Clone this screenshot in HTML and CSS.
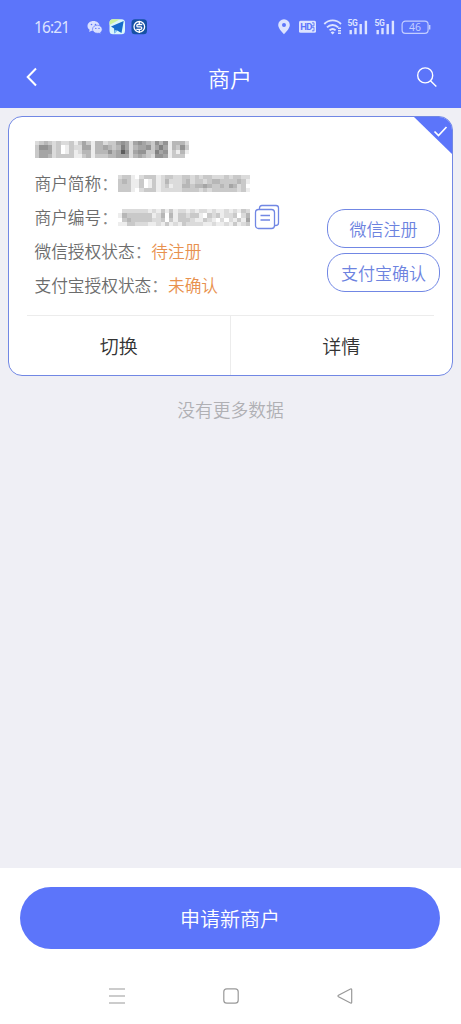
FILE: index.html
```
<!DOCTYPE html>
<html lang="zh-CN">
<head>
<meta charset="utf-8">
<title>商户</title>
<link rel="stylesheet" href="styles.css">
</head>
<body>
<div class="screen">
  <header class="header">
    <div class="status">
      <span class="clock">16:21</span>
      <svg class="status-apps" width="62" height="18" viewBox="0 0 62 18">
        <g fill="#d9e0ff">
          <path d="M6.500 3C2.900 3 .5 5.200.5 8c0 1.600.8 2.900 2.100 3.800L2.200 14l2.300-1.200c.7.2 1.300.2 2 .2C10 13 12.500 10.800 12.500 8S10 3 6.500 3Z"/>
          <path stroke="#5c75fa" stroke-width=".7" d="M10.400 7.200c2.700 0 4.800 1.800 4.800 4.100 0 1.300-.6 2.300-1.600 3l.3 1.700-1.900-.9c-.5.2-1 .2-1.600.2-2.800 0-4.900-1.800-4.900-4 0-2.300 2.100-4.100 4.900-4.100Z"/>
        </g>
        <g fill="#5c75fa"><circle cx="4.500" cy="6.500" r=".8"/><circle cx="8.500" cy="6.500" r=".8"/><circle cx="8.800" cy="10.400" r=".7"/><circle cx="12" cy="10.400" r=".7"/></g>
        <rect x="22.500" y="1.300" width="15.500" height="15" rx="3.500" fill="#d9f6fb"/>
        <path d="M22.500 7V4.800q0-3.500 3.500-3.500h7L22.500 7Z" fill="#cdf39a"/>
        <path d="M24 8.500 36.700 3 34.500 15l-4.300-2.400L27.500 15.500l-.4-5Z" fill="#176ccc"/>
        <path d="m27.500 15.500.2-3.500 2.500.6Z" fill="#91ccf8"/>
        <rect x="44.500" y="1.300" width="15.500" height="15" rx="3.500" fill="#1551a4"/>
        <circle cx="52.300" cy="8.800" r="5.300" fill="none" stroke="#fff" stroke-width="1.300"/>
        <path d="M55.300 6.500h-4.300a1.200 1.200 0 0 0 0 2.400h2.600a1.200 1.200 0 0 1 0 2.400h-4.300M52.300 3v3M52.300 12v3" fill="none" stroke="#fff" stroke-width="1.300"/>
      </svg>
      <svg class="status-system" width="154" height="18" viewBox="0 0 154 18">
        <path fill="#dce3ff" fill-rule="evenodd" d="M7 1.200a5.800 5.800 0 0 1 5.800 5.800c0 4-5.800 9.200-5.800 9.200S1.200 11 1.200 7A5.800 5.800 0 0 1 7 1.200Zm0 3.700a2 2 0 1 0 0 4 2 2 0 0 0 0-4Z"/>
        <rect x="22" y="2.800" width="17" height="12" rx="1.500" fill="#dce3ff"/>
        <text x="23.300" y="12.300" class="hd">HD</text>
        <path d="M35 4.800h2v3h-2M35 9.300h2v3.500h-2" fill="none" stroke="#5c75fa" stroke-width=".9"/>
        <g fill="none" stroke="#dce3ff" stroke-width="1.900">
          <path d="M47.300 6c4.700-4.800 12-4.800 16.700 0M50 9.400c3.200-3.200 8-3.200 11.200 0M52.600 12.400c1.800-1.700 4.300-1.700 6 0"/>
        </g>
        <path fill="#dce3ff" d="m55.600 16.600-2-2.200q2-1.600 4 0ZM61 9.600h3v1.500h-3zM61 12h3v1.500h-3zM61 14.500h3V16h-3z"/>
        <g id="signal" fill="#dce3ff">
          <text x="70.500" y="8.200" class="net">5G</text>
          <path d="M72.500 12h2.400v4.300h-2.400zM77.300 10h2.400v6.300h-2.400zM82.500 6h2.400v10.300h-2.400zM87.700 2.800h2.400v13.500h-2.400z"/>
        </g>
        <use href="#signal" x="27"/>
        <rect x="125.100" y="3.200" width="26" height="12.200" rx="3.300" fill="none" stroke="#c3ceff" stroke-width="1.200"/>
        <path d="M152.700 7v4.600" stroke="#c3ceff" stroke-width="1.400"/>
        <text x="138.100" y="13" class="battery">46</text>
      </svg>
    </div>
    <nav class="nav">
      <svg width="18" height="22" viewBox="0 0 18 22" fill="none" stroke="#fff" stroke-width="2"><path d="m13 2.500-8.300 8.500L13 19.500"/></svg>
      <h1 class="title">商户</h1>
      <svg width="22" height="22" viewBox="0 0 22 22" fill="none" stroke="#fff" stroke-width="1.400"><circle cx="9.200" cy="9.400" r="7.500"/><path d="m14.500 14.800 5.800 5.700"/></svg>
    </nav>
  </header>

  <main class="content">
    <section class="card">
      <svg class="corner" width="40" height="39" viewBox="0 0 40 39"><path d="M0 0h40v39Z" fill="#5c75fa"/><path d="m21.500 15.500 4 4 8-8.500" fill="none" stroke="#fff" stroke-width="1.700"/></svg>
      <div class="card-body">
        <div class="info">
          <svg class="mosaic mosaic-name" data-levels="234323223135314423356525654364614442|366523013225514454347524556357514363|355523013124414446459625663375613141|355423333113413334455524543266513330"></svg>
          <p class="row">商户简称<span class="colon">：</span><svg class="mosaic mosaic-short" data-levels="2331023331233223323233222323322|3431130131242223423323443333431|3331130131231224434454334354230|3331023331222223333232333333231"></svg></p>
          <p class="row">商户编号<span class="colon">：</span><svg class="mosaic mosaic-number" data-levels="0222222121313122121221211212132|1433333312404133233103231223024|0343333322303133321132102021315|1133222112131213222211211213123"></svg><svg class="copy" width="26" height="26" viewBox="0 0 26 26" fill="none" stroke="#7187e4" stroke-width="1.300"><rect x="1.500" y="5.500" width="19" height="19" rx="3"/><path d="M5.500 5V4q0-2.500 2.500-2.500h14Q24.500 1.500 24.500 4v15q0 2.500-3 2.500H21M6.500 11.500H16M6.500 16H16"/></svg></p>
          <p class="row">微信授权状态<span class="colon">：</span><span class="pending">待注册</span></p>
          <p class="row">支付宝授权状态<span class="colon">：</span><span class="pending">未确认</span></p>
        </div>
        <div class="actions">
          <button class="outline">微信注册</button>
          <button class="outline">支付宝确认</button>
        </div>
      </div>
      <div class="divider"></div>
      <div class="card-footer">
        <button class="link">切换</button>
        <button class="link">详情</button>
      </div>
    </section>
    <p class="empty">没有更多数据</p>
  </main>

  <footer class="bottom">
    <button class="primary">申请新商户</button>
    <div class="system-nav">
      <svg width="18" height="18" viewBox="0 0 18 18"><path d="M1 2h16M1 9h16M1 16h16"/></svg>
      <svg width="18" height="18" viewBox="0 0 18 18"><rect x="1.800" y="1.800" width="14.400" height="14.400" rx="3"/></svg>
      <svg width="18" height="18" viewBox="0 0 18 18"><path d="M14.500 2 2.500 8.300q-1 .7 0 1.400l12 6.300q1.200.4 1.200-.8V2.800q0-1.200-1.200-.8Z"/></svg>
    </div>
  </footer>
</div>
<script src="mosaic.js"></script>
</body>
</html>
```
FILE: styles.css
```
* { box-sizing: border-box; }
body {
  margin: 0;
  font-family: "Noto Sans CJK SC", sans-serif;
  font-weight: 350;
  background: #efeff5;
}
button { font: inherit; padding: 0; border: 0; background: none; }
svg { display: block; flex: none; }
.screen { display: flex; flex-direction: column; width: 100%; height: 1024px; }
.header { height: 108px; background: #5c75fa; color: #fff; }
.status { display: flex; align-items: center; height: 54px; padding: 0 30px 0 34px; }
.clock { width: 53px; font: 15.500px/18px "Noto Sans", sans-serif; color: #dce3ff; letter-spacing: -.9px; }
.status-system { margin-left: auto; }
.hd { font: 700 9.500px Roboto, sans-serif; fill: #5c75fa; letter-spacing: -.7px; }
.net { font: 700 8.500px Roboto, sans-serif; letter-spacing: -.5px; }
.battery { font: 10.500px "Noto Sans", sans-serif; fill: #c3ceff; text-anchor: middle; }
.nav { display: flex; align-items: center; justify-content: space-between; height: 46px; padding: 0 23px; }
.title { margin: 0 0 0 3px; font-size: 22px; line-height: 44px; font-weight: 350; }
.content { flex: 1; padding: 8px 8px 0; }
.card {
  position: relative;
  height: 260px;
  border: 1.500px solid #7187e4;
  border-radius: 14px;
  background: #fff;
  overflow: hidden;
}
.corner { position: absolute; top: -1px; right: -1px; }
.card-body { display: flex; justify-content: space-between; height: 198px; padding: 0 12px 0 25.500px; }
.info { padding-top: 24px; }
.row { display: flex; align-items: center; height: 34px; margin: 0; font-size: 16.700px; color: #6c6c6c; white-space: nowrap; }
.colon { color: #888; }
.pending { color: #e8914e; }
.mosaic-name { width: 154px; height: 17px; margin-bottom: 8px; }
.mosaic-short, .mosaic-number { width: 132px; height: 17px; }
.copy { margin-left: 4px; }
.actions { display: flex; flex-direction: column; gap: 5px; padding-top: 92px; }
.outline {
  width: 113px;
  height: 39px;
  border: 1.300px solid #7187e4;
  border-radius: 18px;
  color: #6d83df;
  font-size: 17px;
  line-height: 36px;
}
.divider { height: 1px; margin: 0 18px; background: #ececec; }
.card-footer { display: grid; grid-template-columns: 1fr 1fr; height: 60px; }
.link { font-size: 19px; line-height: 58px; color: #333; }
.link:first-child { padding-right: 2px; }
.link + .link { margin-left: -1px; border-left: 1px solid #ececec; }
.empty { margin: 19px 0 0; text-align: center; font-size: 17.800px; line-height: 28px; color: #b0b0b4; }
.bottom { height: 156px; padding: 19px 20px 0; background: #fff; }
.primary { display: block; width: 420px; height: 62px; border-radius: 31px; background: #5c75fa; color: #fff; font-size: 20px; }
.system-nav { display: flex; justify-content: space-between; padding: 38px 87px 0 88px; fill: none; stroke: #999; stroke-width: 1.200; }
```
FILE: mosaic.js
```
// Each digit is the darkness of one cell in a masked value.
document.querySelectorAll('.mosaic').forEach(function (svg) {
  var rows = svg.dataset.levels.split('|');
  svg.setAttribute('viewBox', '0 0 ' + rows[0].length + ' ' + rows.length);
  svg.setAttribute('preserveAspectRatio', 'none');
  svg.setAttribute('shape-rendering', 'crispEdges');
  rows.forEach(function (row, y) {
    row.split('').forEach(function (level, x) {
      var cell = document.createElementNS('http://www.w3.org/2000/svg', 'rect');
      var shade = 255 - level * 18;
      cell.setAttribute('x', x);
      cell.setAttribute('y', y);
      cell.setAttribute('width', 1);
      cell.setAttribute('height', 1);
      cell.setAttribute('fill', 'rgb(' + shade + ',' + shade + ',' + shade + ')');
      svg.appendChild(cell);
    });
  });
});
```
